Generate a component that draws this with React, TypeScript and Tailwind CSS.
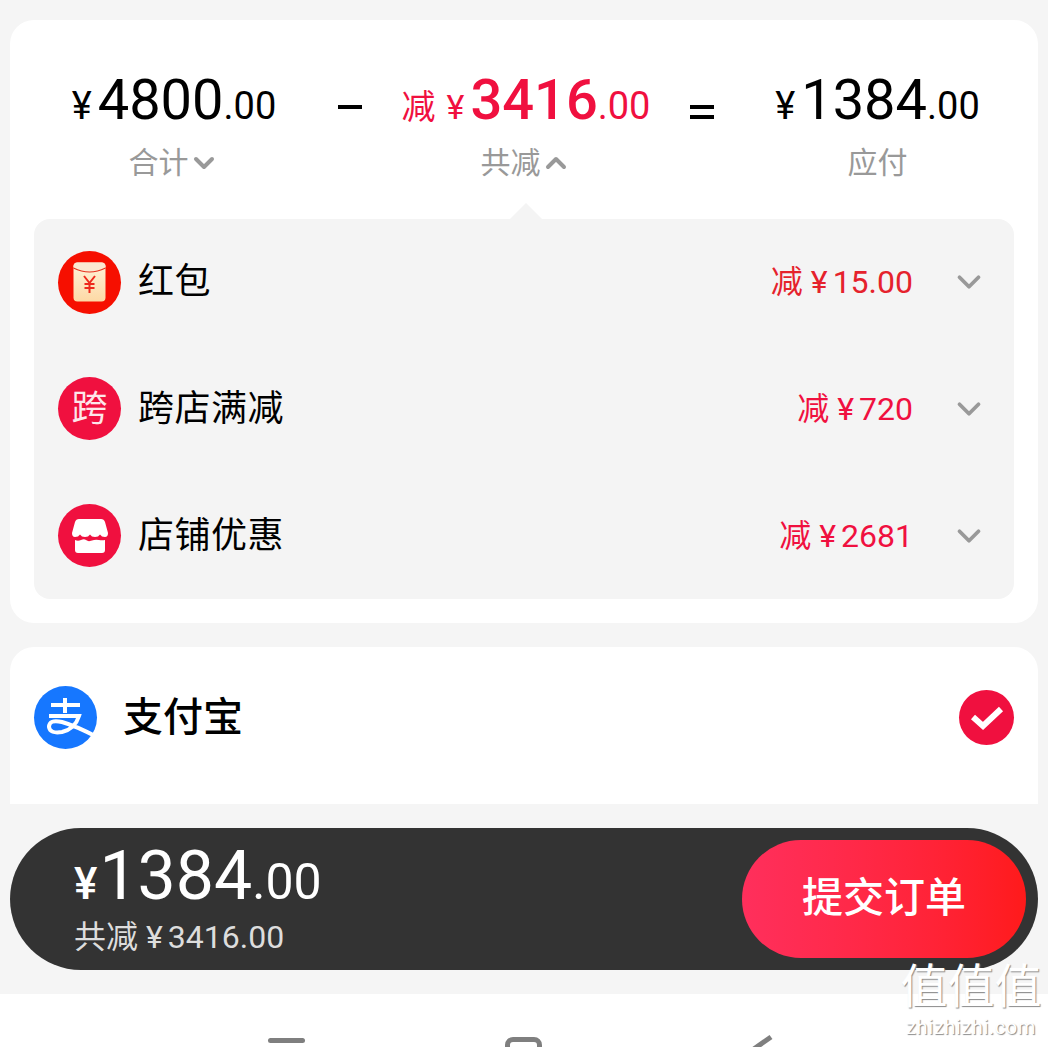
import { ChevronDown, ChevronUp } from "lucide-react"

const fontStack = { fontFamily: '"Roboto", "Noto Sans CJK SC", sans-serif' }

type Discount = {
  title: string
  amount: string
  color: string
  icon: React.ReactNode
}

function RedPacketIcon() {
  return (
    <span className="flex h-[63px] w-[63px] shrink-0 items-center justify-center rounded-full bg-[#f60f00]">
      <svg width="33" height="40" viewBox="0 0 33 40">
        <defs>
          <linearGradient id="packet" x1="0" y1="0" x2="0" y2="1">
            <stop offset="0" stopColor="#fff3da" />
            <stop offset="1" stopColor="#fdd9a5" />
          </linearGradient>
        </defs>
        <rect x="0.5" y="0.5" width="32" height="39" rx="4" fill="url(#packet)" />
        <path d="M0.5 5q16 8 32 0v-1a4 4 0 0 0-4-3.5h-24a4 4 0 0 0-4 3.5z" fill="#fbe9d2" />
        <path d="M0.5 6q16 8 32 0" fill="none" stroke="#e5301e" strokeWidth="1.2" />
        <path
          d="M11 14l5.5 7 5.5-7M11.5 22h10M11.5 26h10M16.5 21v10"
          fill="none"
          stroke="#ee2a1c"
          strokeWidth="2"
        />
      </svg>
    </span>
  )
}

function CrossStoreIcon() {
  return (
    <span className="flex h-[63px] w-[63px] shrink-0 items-center justify-center rounded-full bg-[#f0103f] text-[36px] leading-none text-[#fde6ea]">
      跨
    </span>
  )
}

function StoreIcon() {
  return (
    <span className="flex h-[63px] w-[63px] shrink-0 items-center justify-center rounded-full bg-[#f0103f]">
      <svg width="36" height="34" viewBox="0 0 36 34" fill="#fff">
        <path d="M7 0h22q3 0 4 3l3 11q0 4-3 4-3.500 0-5-2.500-1.500 2.500-5 2.500t-5-2.500q-1.500 2.500-5 2.500t-5-2.500q-1.500 2.500-5 2.500-3 0-3-4l3-11q1-3 4-3z" />
        <path d="M3 21q3 1.500 6 0t5 0 4 1 4-1 5 0 6 0v10q0 3-3 3h-24q-3 0-3-3z" />
      </svg>
    </span>
  )
}

const discounts: Discount[] = [
  { title: "红包", amount: "15.00", color: "text-[#e5222c]", icon: <RedPacketIcon /> },
  { title: "跨店满减", amount: "720", color: "text-[#f0103f]", icon: <CrossStoreIcon /> },
  { title: "店铺优惠", amount: "2681", color: "text-[#f0103f]", icon: <StoreIcon /> },
]

function Price({ value, cents, symbol = "text-[38px]" }: { value: string; cents: string; symbol?: string }) {
  return (
    <div className="flex items-baseline whitespace-nowrap leading-none">
      <span className={`${symbol} mr-[6px]`}>¥</span>
      <span className="text-[56px]">{value}</span>
      <span className="text-[38px]">.{cents}</span>
    </div>
  )
}

export default function App() {
  return (
    <div className="relative h-[1047px] w-[1048px] overflow-hidden bg-[#f5f5f5] text-black" style={fontStack}>
      <div className="flex flex-col gap-6 px-[10px] pt-5">
        {/* order totals */}
        <section className="rounded-[24px] bg-white px-6 pb-6">
          <div className="flex h-[199px] pl-[36px] pt-[52px]">
            <div className="flex w-[208px] flex-col items-center">
              <Price value="4800" cents="00" />
              <div className="mt-[15px] flex items-center text-[30px] leading-[40px] text-[#999999]">
                合计
                <ChevronDown size={32} strokeWidth={3} className="-ml-px" />
              </div>
            </div>
            <div className="ml-[60px] mt-[33px] h-1 w-6 bg-black" />
            <div className="relative ml-[45px] flex w-[238px] flex-col items-center">
              <div className="flex items-baseline whitespace-nowrap font-medium leading-none text-[#f0103f]">
                <span className="mr-[11px] text-[34px] font-normal">减</span>
                <span className="mr-[6px] text-[34px] font-normal">¥</span>
                <span className="text-[56px]">3416</span>
                <span className="text-[38px] font-normal">.00</span>
              </div>
              <div className="mt-[15px] flex items-center text-[30px] leading-[40px] text-[#999999]">
                共减
                <ChevronUp size={32} strokeWidth={3} className="-ml-px" />
              </div>
              {/* notch pointing at the open breakdown */}
              <div className="absolute left-[103px] top-[131px] border-x-[16px] border-b-[16px] border-x-transparent border-b-[#f4f4f4]" />
            </div>
            <div className="ml-[45px] mt-[33px] flex h-[14px] w-6 flex-col justify-between">
              <div className="h-1 bg-black" />
              <div className="h-1 bg-black" />
            </div>
            <div className="ml-[66px] flex w-[195px] flex-col items-center">
              <Price value="1384" cents="00" />
              <div className="mt-[15px] text-[30px] leading-[40px] text-[#999999]">应付</div>
            </div>
          </div>

          <div className="grid h-[380px] grid-rows-3 rounded-[16px] bg-[#f4f4f4] px-6">
            {discounts.map((item) => (
              <div key={item.title} className="flex items-center">
                {item.icon}
                <span className="ml-[17px] text-[36px] tracking-[0.5px]">{item.title}</span>
                <span className={`ml-auto flex items-baseline text-[32px] ${item.color}`}>
                  <span className="mr-[8px]">减</span>
                  <span className="mr-[5px]">¥</span>
                  {item.amount}
                </span>
                <ChevronDown size={38} strokeWidth={2.4} className="ml-[37px] mr-[2px] text-[#999999]" />
              </div>
            ))}
          </div>
        </section>

        {/* payment method */}
        <section className="flex h-[157px] items-start rounded-t-[24px] bg-white px-6 pt-[39px]">
          <span className="flex h-[63px] w-[63px] items-center justify-center rounded-full bg-[#1677ff]">
            <svg width="63" height="63" viewBox="0 0 63 63" fill="none" stroke="#fff" strokeWidth="4">
              <path d="M17 19h29M31 12v15M15 30h30q-4 13-17 16-12 2-13-5 0-8 13-5 14 4 35 15" />
            </svg>
          </span>
          <span className="ml-[26px] mt-[8px] text-[40px] font-medium leading-[48px]">支付宝</span>
          <span className="ml-auto mt-1 flex h-[55px] w-[55px] items-center justify-center rounded-full bg-[#f0103f]">
            <svg width="36" height="28" viewBox="0 0 36 28" fill="none" stroke="#fff" strokeWidth="6">
              <path d="M4 13l10 9 18-17" />
            </svg>
          </span>
        </section>

        {/* checkout bar */}
        <section className="flex h-[142px] items-center rounded-full bg-[#333333] pl-[64px] pr-3 text-white">
          <div className="flex flex-col">
            <div className="flex items-baseline leading-none">
              <span className="mr-[2px] text-[44px] font-medium">¥</span>
              <span className="text-[68px]">1384</span>
              <span className="text-[50px]">.00</span>
            </div>
            <div className="mt-[8px] flex items-baseline text-[32px] leading-[38px] text-[#dddddd]">
              <span className="mr-[8px]">共减</span>
              <span className="mr-[5px]">¥</span>
              3416.00
            </div>
          </div>
          <button className="ml-auto flex h-[118px] w-[284px] items-center justify-center rounded-full bg-gradient-to-r from-[#ff2f5c] to-[#ff1a1a] text-[41px] font-medium text-white">
            提交订单
          </button>
        </section>
      </div>

      {/* system navigation, cut off by the bottom edge */}
      <nav className="absolute inset-x-0 top-[994px] h-[53px] bg-white">
        <div className="absolute left-[268px] top-[44px] h-[5px] w-[37px] rounded-sm bg-[#7f7f7f]" />
        <div className="absolute left-[505px] top-[43px] h-10 w-[37px] rounded-[8px] border-[5px] border-[#7f7f7f]" />
        <svg className="absolute left-[745px] top-[40px]" width="30" height="13" viewBox="0 0 30 13" fill="none" stroke="#7f7f7f" strokeWidth="5">
          <path d="M26 3L6 17" />
        </svg>
      </nav>

      {/* site watermark */}
      <div className="absolute left-[899px] top-[958px] flex w-[144px] flex-col items-center text-white [text-shadow:1px_1px_1px_#8a8a8a]">
        <div className="whitespace-nowrap text-[47px] leading-[58px]">值值值</div>
        <div className="-mt-px whitespace-nowrap text-[20px] leading-[24px] tracking-[0.6px]">zhizhizhi.com</div>
      </div>
    </div>
  )
}
